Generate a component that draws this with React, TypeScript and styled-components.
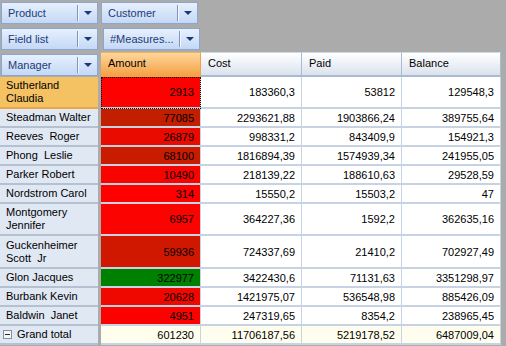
import React from 'react';
import styled, { createGlobalStyle } from 'styled-components';

interface ManagerRow {
	name: string;
	amount: number;
	cost: string;
	paid: string;
	balance: string;
	height: number;
	selected?: boolean;
}

const ROWS: ManagerRow[] = [
	{ name: 'Sutherland\nClaudia', amount: 2913, cost: '183360,3', paid: '53812', balance: '129548,3', height: 32, selected: true },
	{ name: 'Steadman Walter', amount: 77085, cost: '2293621,88', paid: '1903866,24', balance: '389755,64', height: 19 },
	{ name: 'Reeves  Roger', amount: 26879, cost: '998331,2', paid: '843409,9', balance: '154921,3', height: 19 },
	{ name: 'Phong  Leslie', amount: 68100, cost: '1816894,39', paid: '1574939,34', balance: '241955,05', height: 19 },
	{ name: 'Parker Robert', amount: 10490, cost: '218139,22', paid: '188610,63', balance: '29528,59', height: 19 },
	{ name: 'Nordstrom Carol', amount: 314, cost: '15550,2', paid: '15503,2', balance: '47', height: 19 },
	{ name: 'Montgomery\nJennifer', amount: 6957, cost: '364227,36', paid: '1592,2', balance: '362635,16', height: 32 },
	{ name: 'Guckenheimer\nScott  Jr', amount: 59936, cost: '724337,69', paid: '21410,2', balance: '702927,49', height: 33 },
	{ name: 'Glon Jacques', amount: 322977, cost: '3422430,6', paid: '71131,63', balance: '3351298,97', height: 19 },
	{ name: 'Burbank Kevin', amount: 20628, cost: '1421975,07', paid: '536548,98', balance: '885426,09', height: 19 },
	{ name: 'Baldwin  Janet', amount: 4951, cost: '247319,65', paid: '8354,2', balance: '238965,45', height: 19 },
];

const COLUMNS = [
	{ title: 'Amount', width: 100, active: true },
	{ title: 'Cost', width: 101 },
	{ title: 'Paid', width: 100 },
	{ title: 'Balance', width: 99 },
];

const MIN = Math.min(...ROWS.map((r) => r.amount));
const MAX = Math.max(...ROWS.map((r) => r.amount));

// color scale red -> green
const scaleColor = (v: number): string => {
	const t = (v - MIN) / (MAX - MIN);
	return `rgb(${Math.round(255 * (1 - t))}, ${Math.round(128 * t)}, 0)`;
};

const GlobalStyle = createGlobalStyle`
	html, body {
		margin: 0;
		padding: 0;
		background: #ababab;
	}
	body {
		font-family: "Liberation Sans", Arial, sans-serif;
		font-size: 11px;
		color: #000;
	}
`;

const FieldButtonBox = ({ label }: { label: string }): JSX.Element => (
	<FieldButton>
		<Label>{label}</Label>
		<Separator />
		<ArrowBox>
			<Arrow />
		</ArrowBox>
	</FieldButton>
);

const App = (): JSX.Element => (
	<>
		<GlobalStyle />
		<Page>
			<FilterArea>
				<FieldButtonBox label="Product" />
				<FieldButtonBox label="Customer" />
			</FilterArea>
			<ColumnArea>
				<RowFieldSlot>
					<FieldButtonBox label="Field list" />
				</RowFieldSlot>
				<DataFieldSlot>
					<FieldButtonBox label="#Measures..." />
				</DataFieldSlot>
			</ColumnArea>
			<Grid>
				<HeaderRow>
					<Corner>
						<FieldButtonBox label="Manager" />
					</Corner>
					{COLUMNS.map((c) => (
						<ColHeader key={c.title} $w={c.width} $active={c.active}>
							{c.title}
						</ColHeader>
					))}
				</HeaderRow>
				{ROWS.map((r) => (
					<TableRow key={r.name} $h={r.height}>
						<RowHeader $selected={r.selected}>{r.name}</RowHeader>
						<Cell $w={100} $bg={scaleColor(r.amount)} $focus={r.selected}>
							{r.amount}
						</Cell>
						<Cell $w={101}>{r.cost}</Cell>
						<Cell $w={100}>{r.paid}</Cell>
						<Cell $w={99}>{r.balance}</Cell>
					</TableRow>
				))}
				<TableRow $h={19}>
					<RowHeader>
						<svg width="9" height="9" viewBox="0 0 9 9">
							<rect x="0.5" y="0.5" width="8" height="8" fill="#f4f6fa" stroke="#8a8f98" />
							<line x1="2" y1="4.5" x2="7" y2="4.5" stroke="#2a2a2a" />
						</svg>
						<TotalLabel>Grand total</TotalLabel>
					</RowHeader>
					<Cell $w={100} $bg="#fffeee">601230</Cell>
					<Cell $w={101} $bg="#fffeee">11706187,56</Cell>
					<Cell $w={100} $bg="#fffeee">5219178,52</Cell>
					<Cell $w={99} $bg="#fffeee">6487009,04</Cell>
				</TableRow>
			</Grid>
		</Page>
	</>
);

const Page = styled.div`
	width: 506px;
	height: 346px;
	overflow: hidden;
	background: #ababab;
`;

const FilterArea = styled.div`
	display: flex;
	gap: 3px;
	height: 26px;
	padding: 2px 0 0 1px;
	box-sizing: border-box;
`;

const ColumnArea = styled.div`
	display: flex;
	height: 26px;
	padding-top: 2px;
	box-sizing: border-box;
`;

const RowFieldSlot = styled.div`
	width: 101px;
	padding-left: 1px;
	box-sizing: border-box;
`;

const DataFieldSlot = styled.div`
	padding-left: 2px;
`;

const FieldButton = styled.div`
	display: flex;
	align-items: center;
	width: 97px;
	height: 22px;
	box-sizing: border-box;
	border: 1px solid #8ca7cf;
	background: linear-gradient(#e7f0fd, #c4d8f6);
	color: #1d3a78;
`;

const Label = styled.span`
	flex: 1;
	padding-left: 6px;
	white-space: nowrap;
	overflow: hidden;
`;

const Separator = styled.span`
	width: 1px;
	height: 16px;
	background: #7d95ba;
	box-shadow: 1px 0 0 #f3f7fe;
`;

const ArrowBox = styled.span`
	display: flex;
	justify-content: center;
	align-items: center;
	width: 19px;
	height: 100%;
`;

const Arrow = styled.span`
	width: 0;
	height: 0;
	border-left: 4px solid transparent;
	border-right: 4px solid transparent;
	border-top: 4px solid #1d3a78;
`;

const Grid = styled.div`
	display: flex;
	flex-direction: column;
`;

const HeaderRow = styled.div`
	display: flex;
	height: 25px;
`;

const Corner = styled.div`
	width: 101px;
	padding: 2px 0 0 1px;
	box-sizing: border-box;
`;

const ColHeader = styled.div<{ $w: number; $active?: boolean }>`
	width: ${(p) => p.$w}px;
	box-sizing: border-box;
	padding: 4px 0 0 7px;
	background: ${(p) =>
		p.$active ? 'linear-gradient(#fdd79c, #f6a146)' : 'linear-gradient(#ffffff, #dbe2ed)'};
	border-right: 1px solid ${(p) => (p.$active ? '#efa24a' : '#a9bbd2')};
	border-bottom: 2px solid ${(p) => (p.$active ? '#efa24a' : '#a9bbd2')};
	border-top: 1px solid ${(p) => (p.$active ? '#f2b060' : '#ced8e6')};
`;

const TableRow = styled.div<{ $h: number }>`
	display: flex;
	height: ${(p) => p.$h}px;
`;

const RowHeader = styled.div<{ $selected?: boolean }>`
	display: flex;
	align-items: center;
	width: 98px;
	margin-right: 3px;
	padding: 0 4px 0 6px;
	box-sizing: border-box;
	background: ${(p) => (p.$selected ? '#f4c163' : '#e0e8f4')};
	border-bottom: 2px solid ${(p) => (p.$selected ? '#e9a548' : '#b5c1d1')};
	line-height: 13px;
	white-space: pre;
	svg {
		flex: none;
		margin-left: -3px;
	}
`;

const TotalLabel = styled.span`
	padding-left: 5px;
`;

const Cell = styled.div<{ $w: number; $bg?: string; $focus?: boolean }>`
	display: flex;
	align-items: center;
	justify-content: flex-end;
	width: ${(p) => p.$w}px;
	padding-right: 6px;
	box-sizing: border-box;
	background: ${(p) => p.$bg ?? '#ffffff'};
	border-right: 1px solid #c7d2e3;
	border-bottom: 2px solid #c7d2e3;
	outline: ${(p) => (p.$focus ? '1px dotted #000' : 'none')};
	outline-offset: -1px;
`;

export default App;
